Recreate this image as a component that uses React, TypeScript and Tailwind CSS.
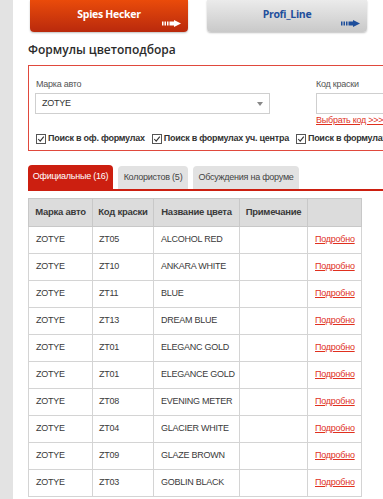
import React from "react";

const rows = [
  ["ZT05", "ALCOHOL RED"],
  ["ZT10", "ANKARA WHITE"],
  ["ZT11", "BLUE"],
  ["ZT13", "DREAM BLUE"],
  ["ZT01", "ELEGANC GOLD"],
  ["ZT01", "ELEGANCE GOLD"],
  ["ZT08", "EVENING METER"],
  ["ZT04", "GLACIER WHITE"],
  ["ZT09", "GLAZE BROWN"],
  ["ZT03", "GOBLIN BLACK"],
];

function Arrow({ color }: { color: string }) {
  return (
    <svg width="19" height="7" viewBox="0 0 19 7" className="absolute right-[7px] bottom-[5px]">
      <rect x="0" y="1.5" width="1.5" height="4" fill={color} />
      <rect x="2.5" y="1.5" width="1.5" height="4" fill={color} />
      <rect x="5" y="1.5" width="1.5" height="4" fill={color} />
      <rect x="7.5" y="1.5" width="5" height="4" fill={color} />
      <polygon points="12,0 19,3.5 12,7" fill={color} />
    </svg>
  );
}

function Check({ label }: { label: string }) {
  return (
    <label className="flex items-center gap-[2px] whitespace-nowrap">
      <svg width="10" height="10" viewBox="0 0 10 10" className="shrink-0">
        <rect x="0.5" y="0.5" width="9" height="9" fill="#fff" stroke="#555" />
        <path d="M2.2 5 L4.2 7.2 L7.8 2.6" fill="none" stroke="#333" strokeWidth="1.1" />
      </svg>
      <span className="font-bold text-[9px] tracking-[-0.25px] text-[#333]">{label}</span>
    </label>
  );
}

export default function App() {
  return (
    <div className="w-[383px] h-[499px] overflow-hidden flex bg-white font-['Liberation_Sans',Arial,sans-serif]">
      <div className="w-[13px] shrink-0 bg-[#e3e3e3]" />
      <div className="pl-[15px] shrink-0 w-[600px]">
        {/* brand buttons */}
        <div className="flex gap-[19px] pl-[2px] font-['Open_Sans',sans-serif]">
          <div className="relative w-[158px] h-[32px] rounded-b-[4px] bg-gradient-to-b from-[#ea4b0a] to-[#b9290c] shadow-[0_1px_2px_rgba(0,0,0,0.25)] flex justify-center pt-[7px]">
            <span className="text-white font-bold text-[10.5px] tracking-[-0.3px] leading-[15px]">Spies Hecker</span>
            <Arrow color="#fff" />
          </div>
          <div className="relative w-[160px] h-[32px] rounded-b-[4px] bg-gradient-to-b from-[#ebebeb] to-[#c9c9c9] shadow-[0_1px_2px_rgba(0,0,0,0.25)] flex justify-center pt-[7px]">
            <span className="text-[#1f4f9c] font-bold text-[10.5px] tracking-[-0.3px] leading-[15px]">Profi_Line</span>
            <Arrow color="#1f4f9c" />
          </div>
          <div className="w-[160px] h-[32px] rounded-b-[4px] bg-gradient-to-b from-[#ebebeb] to-[#c9c9c9]" />
        </div>

        <h1 className="mt-[9px] font-['Open_Sans',sans-serif] font-semibold text-[12px] text-[#2b2b2b] leading-[17px]">
          Формулы цветоподбора
        </h1>

        {/* search box */}
        <div className="mt-[7px] w-[520px] h-[86px] border border-[#e0493d] pl-[6px] pt-[12px]">
          <div className="flex gap-[46px]">
            <div className="w-[235px]">
              <div className="text-[9px] tracking-[-0.25px] text-[#555] leading-[13px] pl-[1px]">Марка авто</div>
              <div className="mt-[2px] h-[21px] border border-[#cfcfcf] flex items-center justify-between pl-[6px] pr-[6px]">
                <span className="text-[9px] tracking-[-0.25px] text-[#333]">ZOTYE</span>
                <span className="w-0 h-0 border-l-[3px] border-r-[3px] border-t-[4px] border-l-transparent border-r-transparent border-t-[#888]" />
              </div>
            </div>
            <div className="w-[200px]">
              <div className="text-[9px] tracking-[-0.25px] text-[#555] leading-[13px]">Код краски</div>
              <div className="mt-[2px] h-[21px] border border-[#cfcfcf]" />
              <div className="text-[9px] tracking-[-0.25px] text-[#e0301e] underline leading-[13px]">Выбрать код &gt;&gt;&gt;</div>
            </div>
          </div>
          <div className="flex gap-[7px] mt-[5px] pl-[1px]">
            <Check label="Поиск в оф. формулах" />
            <Check label="Поиск в формулах уч. центра" />
            <Check label="Поиск в формулах колористов" />
          </div>
        </div>

        {/* tabs */}
        <div className="mt-[14px] flex items-end gap-[5px] border-b-2 border-[#cc1f10] w-[360px]">
          <div className="w-[85px] h-[24px] rounded-t-[4px] bg-[#cc1f10] flex items-center justify-center text-white text-[9px] tracking-[-0.25px] whitespace-nowrap">
            Официальные (16)
          </div>
          <div className="w-[70px] h-[23px] rounded-t-[4px] bg-[#e2e2e2] flex items-center justify-center text-[#444] text-[9px] tracking-[-0.25px] whitespace-nowrap">
            Колористов (5)
          </div>
          <div className="w-[106px] h-[23px] rounded-t-[4px] bg-[#e2e2e2] flex items-center justify-center text-[#444] text-[9px] tracking-[-0.25px] whitespace-nowrap">
            Обсуждения на форуме
          </div>
        </div>

        {/* table */}
        <table className="mt-[7px] w-[333px] border-collapse table-fixed text-[9px] tracking-[-0.25px] text-[#3a3a3a]">
          <colgroup>
            <col className="w-[64px]" />
            <col className="w-[61px]" />
            <col className="w-[86px]" />
            <col className="w-[68px]" />
            <col className="w-[54px]" />
          </colgroup>
          <thead>
            <tr className="h-[28px] bg-[#dcdcdc]">
              {["Марка авто", "Код краски", "Название цвета", "Примечание", ""].map((h, i) => (
                <th key={i} className="border border-[#c8c8c8] font-bold text-[9.5px] text-center px-0 whitespace-nowrap">
                  {h}
                </th>
              ))}
            </tr>
          </thead>
          <tbody>
            {rows.map(([code, name], i) => (
              <tr key={i} className="h-[27px]">
                <td className="border border-[#d4d4d4] pl-[7px]">ZOTYE</td>
                <td className="border border-[#d4d4d4] pl-[6px]">{code}</td>
                <td className="border border-[#d4d4d4] pl-[7px] whitespace-nowrap">{name}</td>
                <td className="border border-[#d4d4d4]" />
                <td className="border border-[#d4d4d4] pl-[7px] text-[#e0301e] underline">Подробно</td>
              </tr>
            ))}
          </tbody>
        </table>
      </div>
    </div>
  );
}
